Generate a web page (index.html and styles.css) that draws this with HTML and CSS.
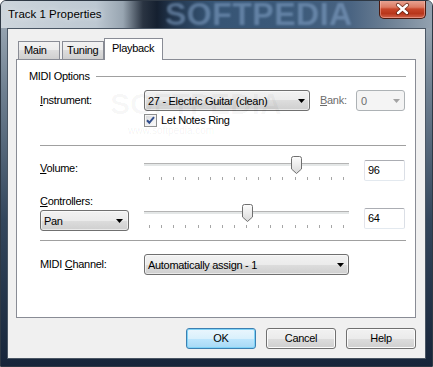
FILE: index.html
```html
<!DOCTYPE html>
<html>
<head>
    <title>Track 1 Properties</title>
    <link rel="stylesheet" href="styles.css">
</head>
<body>
    <div class="window">
        <div class="titlebar">
            <span class="title">Track 1 Properties</span>
            <span class="glass-mark">SOFTPEDIA</span>
            <div class="close">
                <svg width="47" height="18" viewBox="0 0 47 18">
                    <path d="M19 5 L28 13 M28 5 L19 13" stroke="#4a1609" stroke-width="4.2" stroke-linecap="round" fill="none" opacity="0.7"/>
                    <path d="M19 5 L28 13 M28 5 L19 13" stroke="#fff" stroke-width="2.4" stroke-linecap="round" fill="none"/>
                </svg>
            </div>
        </div>

        <div class="client">
            <div class="tabs">
                <div class="tab tab-main">Main</div>
                <div class="tab tab-tuning">Tuning</div>
                <div class="tab active">Playback</div>
            </div>

            <div class="panel">
                <div class="group-head">
                    <span>MIDI Options</span>
                    <div class="rule"></div>
                </div>

                <div class="row row-instrument">
                    <label class="lbl"><u>I</u>nstrument:</label>
                    <div class="combo combo-instrument">
                        <span>27 - Electric Guitar (clean)</span>
                        <svg class="arrow" width="7" height="4" viewBox="0 0 7 4"><path d="M0 0H7L3.5 4Z"/></svg>
                    </div>
                    <label class="lbl lbl-bank disabled"><u>B</u>ank:</label>
                    <div class="combo combo-bank disabled">
                        <span>0</span>
                        <svg class="arrow" width="7" height="4" viewBox="0 0 7 4"><path d="M0 0H7L3.5 4Z"/></svg>
                    </div>
                </div>

                <div class="row row-check">
                    <span class="checkbox">
                        <svg width="13" height="13" viewBox="0 0 13 13">
                            <defs>
                                <linearGradient id="cbg" x1="0" y1="0" x2="1" y2="1">
                                    <stop offset="0" stop-color="#d9dadb"/>
                                    <stop offset="1" stop-color="#fbfbfb"/>
                                </linearGradient>
                            </defs>
                            <rect x="0.5" y="0.5" width="12" height="12" fill="#f4f4f4" stroke="#8e8f8f"/>
                            <rect x="2" y="2" width="9" height="9" fill="url(#cbg)"/>
                            <path d="M3 6.3 L5.3 8.8 L10 3.2" stroke="#324e8c" stroke-width="2" fill="none"/>
                        </svg>
                    </span>
                    <span>Let Notes Ring</span>
                </div>

                <div class="sep sep-1"></div>

                <div class="row row-slider">
                    <label class="lbl lbl-vol"><u>V</u>olume:</label>
                    <div class="slider">
                        <div class="track"></div>
                        <div class="ticks">
                            <i></i><i></i><i></i><i></i><i></i><i></i><i></i><i></i><i></i>
                            <i></i><i></i><i></i><i></i><i></i><i></i><i></i><i></i>
                        </div>
                        <svg class="thumb" style="left: 147px" width="11" height="18" viewBox="0 0 11 18">
                            <defs>
                                <linearGradient id="thg" x1="0" y1="0" x2="0" y2="1">
                                    <stop offset="0" stop-color="#fdfdfd"/>
                                    <stop offset="0.5" stop-color="#ececec"/>
                                    <stop offset="1" stop-color="#d8d8d8"/>
                                </linearGradient>
                            </defs>
                            <path d="M0.5 2.5Q0.5 0.5 2.5 0.5H8.5Q10.5 0.5 10.5 2.5V13L5.5 17.5L0.5 13Z" fill="url(#thg)" stroke="#6f6f6f"/>
                        </svg>
                    </div>
                    <div class="value">96</div>
                </div>

                <div class="row row-ctrl">
                    <div class="ctrl-col">
                        <label class="lbl-small"><u>C</u>ontrollers:</label>
                        <div class="combo combo-pan">
                            <span>Pan</span>
                            <svg class="arrow" width="7" height="4" viewBox="0 0 7 4"><path d="M0 0H7L3.5 4Z"/></svg>
                        </div>
                    </div>
                    <div class="slider slider-pan">
                        <div class="track"></div>
                        <div class="ticks">
                            <i></i><i></i><i></i><i></i><i></i><i></i><i></i><i></i><i></i>
                            <i></i><i></i><i></i><i></i><i></i><i></i><i></i><i></i>
                        </div>
                        <svg class="thumb" style="left: 98px" width="11" height="18" viewBox="0 0 11 18">
                            <path d="M0.5 2.5Q0.5 0.5 2.5 0.5H8.5Q10.5 0.5 10.5 2.5V13L5.5 17.5L0.5 13Z" fill="url(#thg)" stroke="#6f6f6f"/>
                        </svg>
                    </div>
                    <div class="value value-pan">64</div>
                </div>

                <div class="sep sep-2"></div>

                <div class="row row-channel">
                    <label class="lbl">MIDI <u>C</u>hannel:</label>
                    <div class="combo combo-channel">
                        <span>Automatically assign - 1</span>
                        <svg class="arrow" width="7" height="4" viewBox="0 0 7 4"><path d="M0 0H7L3.5 4Z"/></svg>
                    </div>
                </div>

                <span class="mark mark-big">SOFTPEDIA</span>
                <span class="mark mark-url">www.softpedia.com</span>
            </div>

            <div class="buttons">
                <button class="btn default">OK</button>
                <button class="btn">Cancel</button>
                <button class="btn">Help</button>
            </div>
        </div>
    </div>
</body>
</html>
```

FILE: styles.css
```css
* {
    box-sizing: border-box;
}
body {
    margin: 0;
    font-family: "Liberation Sans", Arial, sans-serif;
    font-size: 11px;
    letter-spacing: -0.3px;
    color: #000;
    background: #fff;
}
.window {
    width: 433px;
    height: 367px;
    border: 1px solid #2e3844;
    border-radius: 6px 6px 0 0;
    background: linear-gradient(180deg, #a6b2bd 0, #6e7f90 25%, #33465c 60%, #17253a 100%);
    display: flex;
    flex-direction: column;
    overflow: hidden;
}
.titlebar {
    height: 27px;
    display: flex;
    align-items: flex-start;
    position: relative;
    background: linear-gradient(90deg, #cdd5dc 0, #bdc8d2 95px, #98a5b1 122px, #2a3442 142px, #152030 156px, #22364e 172px, #365474 210px, #3d5b7b 300px, #4a6482 350px, #6f8296 390px, #94a2b0 432px);
}
.title {
    padding-left: 7px;
    line-height: 27px;
    font-size: 11.5px;
    letter-spacing: 0;
    color: #000;
    text-shadow: 0 0 6px rgba(255, 255, 255, 0.8);
}
.glass-mark {
    position: absolute;
    left: 164px;
    top: 0;
    font-size: 32px;
    line-height: 27px;
    font-weight: bold;
    letter-spacing: 0.5px;
    color: rgba(140, 172, 210, 0.5);
    filter: blur(1.2px);
}
.close {
    margin-left: auto;
    margin-right: 6px;
    width: 47px;
    height: 19px;
    margin-top: -1px;
    border: 1px solid #4c1a0f;
    border-top: 0;
    border-radius: 0 0 5px 5px;
    background: linear-gradient(180deg, #e9a898 0, #dc7a62 40%, #c8462a 50%, #b8361b 75%, #d0624a 100%);
    box-shadow: inset 0 0 0 1px rgba(255, 200, 190, 0.45);
    position: relative;
    z-index: 1;
}
.close svg {
    display: block;
    margin-left: -1px;
}
.client {
    flex: 1;
    margin: 0 6px 7px 6px;
    border: 1px solid #4a5664;
    background: #f0f0f0;
    padding: 9px 9px 9px 8px;
    display: flex;
    flex-direction: column;
}
.tabs {
    display: flex;
    align-items: flex-end;
    height: 21px;
    padding-left: 2px;
}
.tab {
    height: 18px;
    line-height: 17px;
    border: 1px solid #898c95;
    border-bottom: 0;
    background: linear-gradient(180deg, #f2f2f2 0, #ebebeb 50%, #dddddd 50%, #cfcfcf 100%);
    padding-left: 5px;
    white-space: nowrap;
}
.tab-main {
    width: 42px;
    margin-right: 2px;
}
.tab-tuning {
    width: 42px;
    padding-left: 4px;
}
.tab.active {
    width: 59px;
    height: 22px;
    line-height: 19px;
    margin-bottom: -1px;
    padding-left: 7px;
    background: #fff;
    position: relative;
    z-index: 1;
}
.panel {
    height: 259px;
    border: 1px solid #898c95;
    background: #fff;
    padding: 0 9px 0 12px;
    position: relative;
}
.group-head {
    margin-top: 10px;
    height: 13px;
    line-height: 13px;
    display: flex;
    align-items: center;
}
.group-head .rule {
    flex: 1;
    height: 1px;
    margin-left: 6px;
    background: #a0a0a0;
}
.row {
    display: flex;
    margin-left: 11px;
}
.lbl {
    width: 104px;
    line-height: 21px;
    flex-shrink: 0;
}
.lbl u, .lbl-small u {
    text-decoration-thickness: 1px;
}
.disabled {
    color: #6d6d6d;
}
.row-instrument {
    margin-top: 7px;
    height: 21px;
}
.combo {
    height: 21px;
    border: 1px solid #707070;
    border-radius: 3px;
    background: linear-gradient(180deg, #f2f2f2 0, #ebebeb 50%, #dddddd 50%, #cfcfcf 100%);
    box-shadow: inset 0 0 0 1px rgba(255, 255, 255, 0.55);
    display: flex;
    align-items: center;
    padding-left: 3px;
    white-space: nowrap;
    flex-shrink: 0;
}
.combo .arrow {
    margin-left: auto;
    margin-right: 4px;
    fill: #000;
}
.combo-instrument {
    width: 166px;
}
.lbl-bank {
    width: 36px;
    margin-left: 10px;
}
.combo-bank {
    width: 49px;
    padding-left: 4px;
}
.combo.disabled {
    border-color: #adb2b5;
    background: #f4f4f4;
    box-shadow: none;
}
.combo.disabled .arrow {
    fill: #a3a3a3;
}
.row-check {
    margin-top: 3px;
    height: 13px;
    line-height: 13px;
    padding-left: 104px;
    align-items: center;
    gap: 4px;
}
.checkbox svg {
    display: block;
}
.sep {
    margin-left: 11px;
    height: 1px;
    background: #a0a0a0;
}
.sep-1 {
    margin-top: 18px;
}
.sep-2 {
    margin-top: 9px;
}
.row-slider {
    margin-top: 9px;
    align-items: flex-start;
}
.lbl-vol {
    margin-top: 3px;
}
.slider {
    width: 205px;
    height: 26px;
    position: relative;
    flex-shrink: 0;
}
.track {
    position: absolute;
    left: 0;
    right: 0;
    top: 8px;
    height: 3px;
    border-top: 1px solid #b4b4b4;
    background: #e4e7e7;
}
.ticks {
    position: absolute;
    left: 5px;
    width: 195px;
    top: 22px;
    display: flex;
    justify-content: space-between;
}
.ticks i {
    width: 1px;
    height: 3px;
    background: #a6a6a6;
}
.thumb {
    position: absolute;
    top: 1px;
    display: block;
}
.value {
    width: 41px;
    height: 21px;
    margin-left: 15px;
    margin-top: 5px;
    border: 1px solid;
    border-color: #abadb3 #dbdfe6 #e3e9ef #e2e3ea;
    border-radius: 2px;
    background: #fff;
    padding-left: 3px;
    line-height: 19px;
}
.row-ctrl {
    margin-top: 14px;
    align-items: flex-start;
}
.ctrl-col {
    width: 104px;
    flex-shrink: 0;
    display: flex;
    flex-direction: column;
}
.lbl-small {
    height: 13px;
    line-height: 13px;
}
.combo-pan {
    width: 89px;
    margin-top: 2px;
}
.combo-pan .arrow {
    margin-right: 5px;
}
.slider-pan {
    margin-top: 8px;
}
.value-pan {
    margin-top: 13px;
}
.row-channel {
    margin-top: 13px;
}
.combo-channel {
    width: 205px;
}
.mark {
    position: absolute;
    pointer-events: none;
    letter-spacing: 0;
    white-space: nowrap;
}
.mark-big {
    left: 93px;
    top: 29px;
    font-size: 30px;
    line-height: 30px;
    font-weight: bold;
    color: rgba(0, 0, 0, 0.035);
}
.mark-url {
    left: 111px;
    top: 66px;
    font-size: 10px;
    line-height: 10px;
    color: rgba(0, 0, 0, 0.06);
}
.buttons {
    display: flex;
    justify-content: flex-end;
    gap: 10px;
    margin-top: 10px;
}
.btn {
    width: 70px;
    height: 21px;
    padding: 0;
    border: 1px solid #707070;
    border-radius: 3px;
    background: linear-gradient(180deg, #f2f2f2 0, #ebebeb 50%, #dddddd 50%, #cfcfcf 100%);
    box-shadow: inset 0 0 0 1px #fbfbfb;
    font: inherit;
    letter-spacing: -0.3px;
    color: #000;
    line-height: 19px;
    text-align: center;
}
.btn.default {
    border-color: #3c7fb1;
    background: linear-gradient(180deg, #eaf6fd 0, #d9f0fc 50%, #bee6fd 50%, #a7d9f5 100%);
    box-shadow: inset 0 0 0 1px #7fd3f7;
}
```
